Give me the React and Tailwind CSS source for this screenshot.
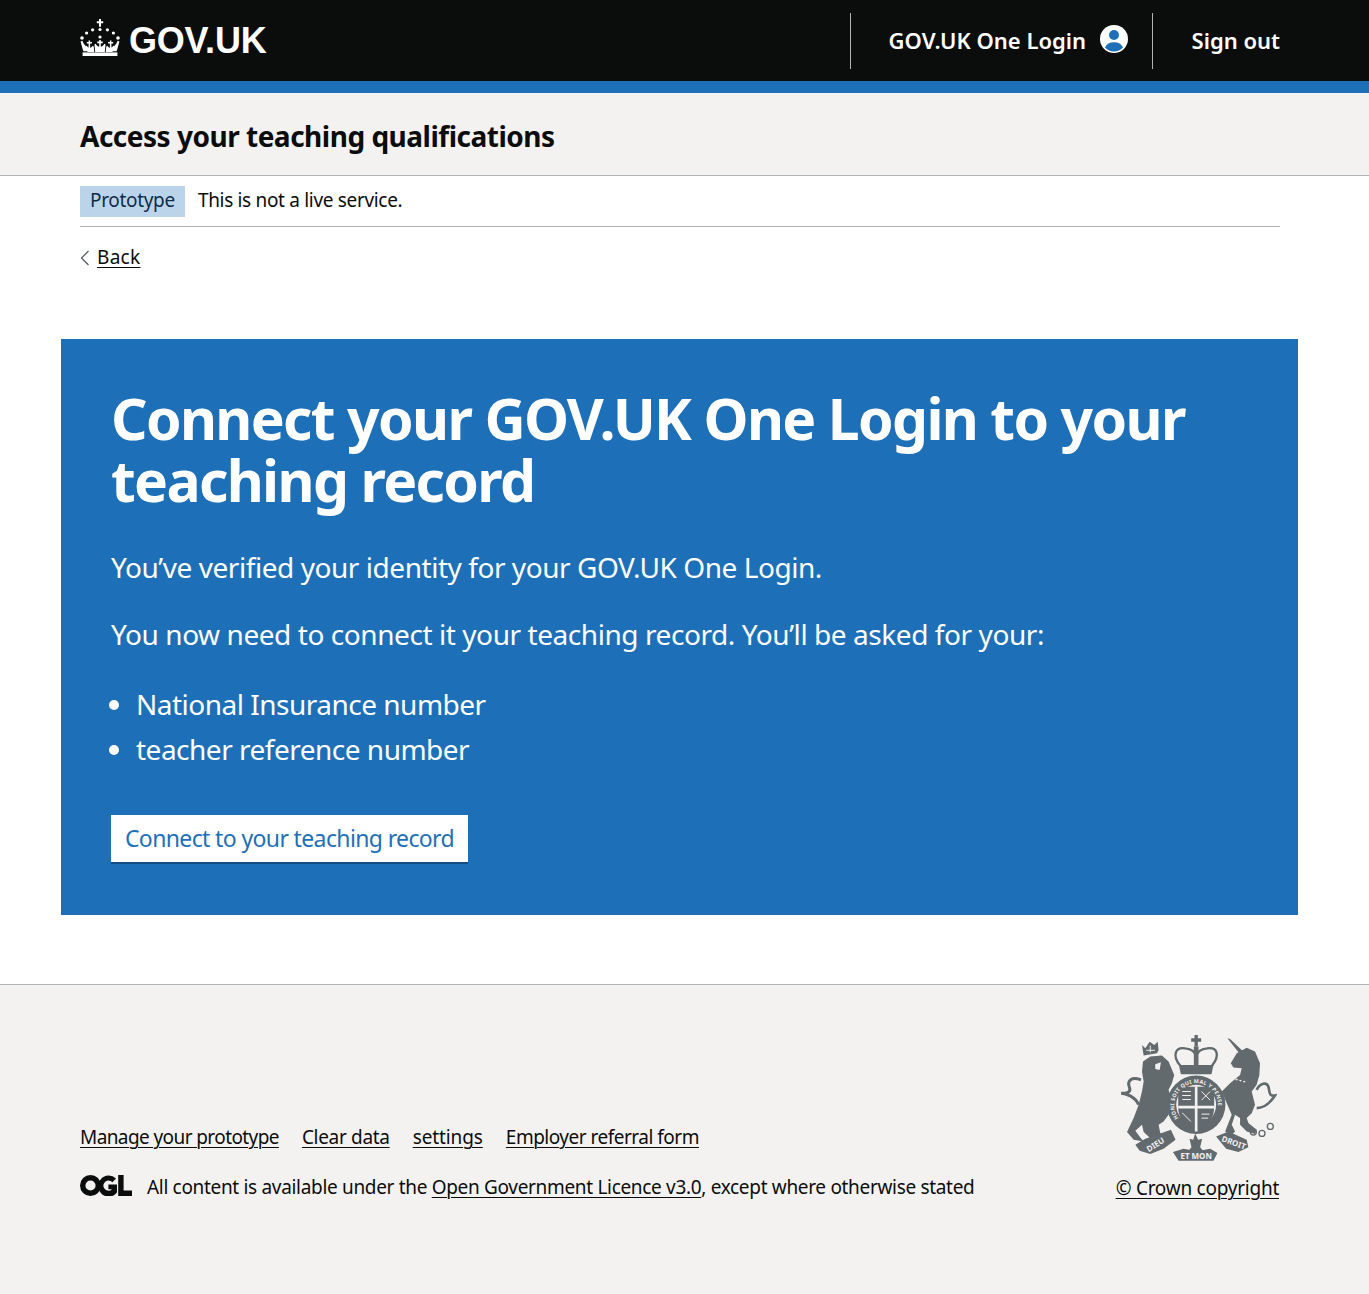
import React from 'react';

const bodyFont = "font-['Noto_Sans','Open_Sans',sans-serif]";
const linkStyle = 'underline underline-offset-[3px] decoration-1';

function Crown() {
  return (
    <svg viewBox="0 0 40 38" className="w-[40px] h-[38px] block mb-[5px]" fill="#fff" aria-hidden="true">
      <path d="M19 0h2v2.2h2.2v2H21v3.6h-2V4.2h-2.2v-2H19z" />
      <circle cx="20" cy="10.5" r="1.6" />
      <circle cx="12.6" cy="10.8" r="1.6" />
      <circle cx="27.4" cy="10.8" r="1.6" />
      <circle cx="6.6" cy="14" r="1.6" />
      <circle cx="33.4" cy="14" r="1.6" />
      <circle cx="2" cy="19" r="1.8" />
      <circle cx="38" cy="19" r="1.8" />
      <circle cx="20" cy="18" r="1.6" />
      <path d="M19.2 21h1.6v1.6h2v1.6h-2v3.6c1.8-.8 3-1.6 3.4-3l1.4.6-.8 7.6H15.2l-.8-7.6 1.4-.6c.4 1.4 1.6 2.2 3.4 3v-3.6h-2v-1.6h2z" />
      <path d="M8.6 21.4h1.5v1.5h1.9v1.5h-1.9v4.4c1.2-.4 2-1 2.4-2l1.2.6.6 5.6H7.6L5 27.4l1.2-.8c.6.8 1.2 1.4 2.4 2v-4.2H6.8v-1.5h1.8z" />
      <path d="M31.4 21.4h-1.5v1.5H28v1.5h1.9v4.4c-1.2-.4-2-1-2.4-2l-1.2.6-.6 5.6h6.7L35 27.4l-1.2-.8c-.6.8-1.2 1.4-2.4 2v-4.2h1.8v-1.5h-1.8z" />
      <path d="M.6 22.6l1.8-.8c.8 2 1.6 3.4 3 5l2.8 5.4H3.4C2.4 29.4 1.4 26 .6 22.6z" />
      <path d="M39.4 22.6l-1.8-.8c-.8 2-1.6 3.4-3 5L31.8 32.2h4.8c1-2.8 2-6.2 2.8-9.6z" />
      <rect x="2.6" y="33.4" width="34.8" height="3.6" />
    </svg>
  );
}

function PersonIcon() {
  return (
    <svg viewBox="0 0 28 28" className="w-[28px] h-[28px] block mb-[3px]" aria-hidden="true">
      <circle cx="14" cy="14" r="14" fill="#fff" />
      <circle cx="14" cy="10" r="5" fill="#1d70b8" />
      <path d="M5 22.4c1.4-3.4 4.8-5.2 9-5.2s7.6 1.8 9 5.2A13 13 0 0 1 14 26.6a13 13 0 0 1-9-4.2z" fill="#1d70b8" />
    </svg>
  );
}

function OglLogo() {
  return (
    <svg viewBox="0 0 52 21" className="w-[52px] h-[21px] block mb-[4px]" fill="#0b0c0c" aria-hidden="true">
      <path fillRule="evenodd" d="M10.5 0a10.5 10.5 0 1 1 0 21 10.5 10.5 0 0 1 0-21zm0 5.4a5.1 5.1 0 1 0 0 10.2 5.1 5.1 0 0 0 0-10.2z" />
      <path d="M31.6 14.7c-1 .8-2.1 1.1-3.2 1a5.1 5.1 0 1 1 4-8.4l3.6-3.8A10.5 10.5 0 1 0 37 17.6V9.6h-8.6v4.6h3.2z" />
      <path d="M38.2 0h5.4v15.6H52V21H38.2z" />
    </svg>
  );
}

// drawn in the coordinates of a 3x crop of the crest, so the viewBox starts at 60,30
function Arms() {
  const ink = '#626a6e';
  const paper = '#f3f2f1';
  return (
    <svg viewBox="60 30 470 382" className="w-[157px] h-[127px] block mr-[3px]" fill={ink} aria-hidden="true">
      {/* lion */}
      <path d="M128 110 150 95 185 92 205 110 222 150 215 175 205 195 215 230 205 270 190 290 175 300 180 325 200 340 195 350 155 345 130 322 125 300 105 318 120 338 130 350 100 345 80 322 100 280 115 240 125 200 130 170 125 140Z" />
      <path d="M122 165C95 155 78 165 88 190 92 205 75 205 62 205 75 205 105 215 115 240" fill="none" stroke={ink} strokeWidth="9" />
      <path d="M125 60 135 70 148 50 162 60 172 50 175 75 170 85 130 92Z" />
      <path d="M138 76h26M150 62v20" stroke={paper} strokeWidth="3" />
      <path d="M165 118 182 112 178 135 165 132Z" fill={paper} />

      {/* unicorn */}
      <path d="M382 40 390 42 428 78 420 88Z" />
      <path d="M392 115 410 85 440 68 465 80 480 115 478 150 470 180 455 200 465 240 455 265 440 280 445 295 470 315 465 328 440 320 420 300 420 280 405 270 395 300 405 320 395 330 375 320 395 270 380 235 365 200 390 175 420 150 425 130 400 128Z" />
      <path d="M470 195C480 175 500 170 505 185 510 200 505 215 525 212 510 235 490 250 470 250" fill="none" stroke={ink} strokeWidth="8" />
      <circle cx="460" cy="322" r="9" fill="none" stroke={ink} strokeWidth="4" />
      <circle cx="486" cy="326" r="9" fill="none" stroke={ink} strokeWidth="4" />
      <circle cx="511" cy="305" r="9" fill="none" stroke={ink} strokeWidth="4" />
      <path d="M395 160 440 172" stroke={paper} strokeWidth="4" strokeDasharray="6 6" />

      {/* crown over the shield */}
      <path d="M283 30h10v10h10v10h-10v14h-10V50h-10V40h10z" />
      <path d="M240 122C215 92 225 65 255 70 275 72 285 80 288 95 291 80 301 72 321 70 351 65 361 90 336 122" fill="none" stroke={ink} strokeWidth="7" />
      <rect x="281" y="64" width="14" height="60" />
      <path d="M236 120h104l-6 28H242z" />

      {/* garter and shield */}
      <circle cx="288" cy="240" r="88" />
      <circle cx="288" cy="240" r="60" fill={paper} />
      <path d="M234 186h108v62c0 42-32 58-54 72-22-14-54-30-54-72z" />
      <path d="M284 186h8v134h-8zM234 243h108v8H234z" fill={paper} />
      <path d="M246 200h26M246 212h26M246 224h26M304 200l26 26M330 200l-26 26M246 264l26 26M304 268h24M304 280h20" stroke={paper} strokeWidth="3" />
      <defs>
        <path id="garter-ring" d="M241 287A66 66 0 1 1 335 287" />
      </defs>
      <text fill={paper} fontSize="16" fontWeight="700" letterSpacing="1">
        <textPath href="#garter-ring" startOffset="3%">HONI SOIT QUI MAL Y PENSE</textPath>
      </text>

      {/* motto scroll */}
      <path d="M105 360 135 342 170 330 212 315 226 345 190 372 150 388 118 378Z" />
      <path d="M218 382 250 372 290 380 330 372 352 385 340 408H235Z" />
      <path d="M348 335 385 320 440 345 445 368 415 382 378 372Z" />
      <path d="M285 326 294 345 306 342 300 368 309 378 285 392 265 378 274 368 268 342 279 345Z" />
      <text x="170" y="367" fill={paper} fontSize="24" fontWeight="700" textAnchor="middle" transform="rotate(-32 170 367)">DIEU</text>
      <text x="288" y="402" fill={paper} fontSize="24" fontWeight="700" textAnchor="middle">ET MON</text>
      <text x="398" y="362" fill={paper} fontSize="24" fontWeight="700" textAnchor="middle" transform="rotate(20 398 362)">DROIT</text>
    </svg>
  );
}

export default function App() {
  return (
    <div className={`${bodyFont} min-h-[1294px] flex flex-col bg-white text-[#0b0c0c]`}>
      <header className="bg-[#0b0c0c] border-b-[12px] border-[#1d70b8]">
        <div className="w-[1200px] ml-[80px] h-[81px] flex items-center justify-between">
          <div className="flex items-center gap-[9px]">
            <Crown />
            <span className="font-['Liberation_Sans',sans-serif] font-bold text-white text-[36px] leading-none tracking-[-0.2px]">GOV.UK</span>
          </div>
          <div className="flex items-center h-[56px] text-white font-semibold text-[22px]">
            <div className="h-full border-l border-[#b1b4b6] pl-[38px] flex items-center gap-[14px] w-[302px]">
              <span>GOV.UK One Login</span>
              <PersonIcon />
            </div>
            <div className="h-full border-l border-[#b1b4b6] pl-[39px] flex items-center">
              <span>Sign out</span>
            </div>
          </div>
        </div>
      </header>

      <div className="bg-[#f3f2f1] border-b border-[#b1b4b6] h-[83px] flex items-center">
        <div className="w-[1200px] ml-[80px] pt-[4px] font-bold text-[28px] tracking-[-0.49px]">Access your teaching qualifications</div>
      </div>

      <main className="w-[1200px] ml-[80px] flex-none">
        <div className="h-[51px] border-b border-[#b1b4b6] flex items-center gap-[13px] text-[19px] tracking-[-0.32px]">
          <strong className="font-normal bg-[#bbd4ea] text-[#0c2d4a] px-[10px] h-[31px] flex items-center pb-[2px]">Prototype</strong>
          <span className="pb-[2px]">This is not a live service.</span>
        </div>
        <div className="mt-[16px] flex items-center gap-[7px] text-[19px] tracking-[0.3px] h-[30px]">
          <svg viewBox="0 0 10 16" className="w-[10px] h-[16px]" fill="none" stroke="#505a5f" strokeWidth="1.2" aria-hidden="true">
            <path d="M8.5 1 1.5 8l7 7" />
          </svg>
          <a className={`${linkStyle} pb-[2px]`} href="#back">Back</a>
        </div>

        <section className="mt-[66px] -ml-[19px] w-[1237px] h-[576px] bg-[#1d70b8] text-white px-[50px] pt-[50px]">
          <h1 className="font-bold text-[57px] leading-[62px] tracking-[-1.65px] -mt-[2px]">Connect your GOV.UK One Login to your teaching record</h1>
          <p className="mt-[38px] text-[28px] leading-[36px] tracking-[-0.45px]">You’ve verified your identity for your GOV.UK One Login.</p>
          <p className="mt-[31px] text-[28px] leading-[36px] tracking-[-0.43px]">You now need to connect it your teaching record. You’ll be asked for your:</p>
          <ul className="mt-[34px] pl-[25px] list-disc text-[28px] leading-[36px] tracking-[-0.5px] flex flex-col gap-[9px]">
            <li>National Insurance number</li>
            <li>teacher reference number</li>
          </ul>
          <a href="#connect" className="mt-[48px] flex items-center justify-center w-[357px] h-[47px] bg-white text-[#1d70b8] text-[23px] tracking-[-0.63px] shadow-[0_2px_0_#144e81]">Connect to your teaching record</a>
        </section>
      </main>

      <footer className="mt-[69px] flex-1 bg-[#f3f2f1] border-t border-[#b1b4b6]">
        <div className="w-[1200px] ml-[80px] pt-[50px] flex justify-between">
          <div className="pt-[87px] text-[19px] tracking-[-0.32px]">
            <ul className="flex gap-[23px] h-[30px] items-center">
              <li><a href="#a" className={`${linkStyle} tracking-[-0.59px]`}>Manage your prototype</a></li>
              <li><a href="#b" className={linkStyle}>Clear data</a></li>
              <li><a href="#c" className={`${linkStyle} tracking-[-0.1px]`}>settings</a></li>
              <li><a href="#d" className={`${linkStyle} tracking-[-0.5px]`}>Employer referral form</a></li>
            </ul>
            <div className="mt-[20px] flex items-center gap-[15px] h-[30px]">
              <OglLogo />
              <span>All content is available under the <a href="#e" className={linkStyle}>Open Government Licence v3.0</a>, except where otherwise stated</span>
            </div>
          </div>
          <div className="flex flex-col items-end">
            <Arms />
            <a href="#f" className={`${linkStyle} mt-[11px] mr-px h-[30px] flex items-center text-[19px] tracking-[-0.25px]`}>© Crown copyright</a>
          </div>
        </div>
      </footer>
    </div>
  );
}
